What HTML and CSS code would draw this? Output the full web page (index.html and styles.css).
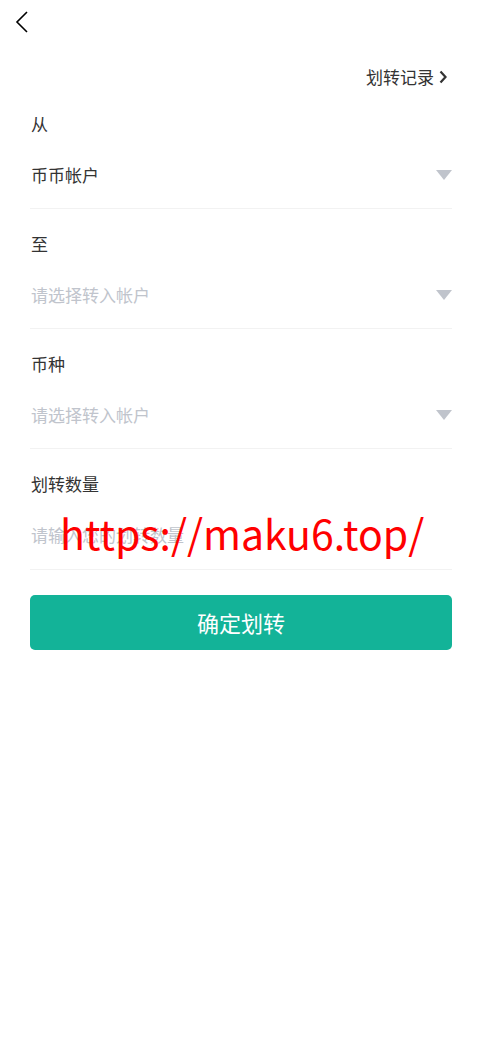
FILE: index.html
```html
<!DOCTYPE html>
<html lang="zh-CN">

<head>
  <meta charset="UTF-8">
  <meta name="viewport" content="width=device-width, initial-scale=1.0">
  <title>划转</title>
  <link rel="stylesheet" href="styles.css">
</head>

<body>

  <header class="nav-bar">
    <a class="back" href="#">
      <svg width="14" height="22" viewBox="0 0 14 22">
        <path d="M12 1 L2 11 L12 21" fill="none" stroke="#000" stroke-width="1.6" />
      </svg>
    </a>
  </header>

  <div class="records">
    <a href="#">划转记录
      <svg width="10" height="14" viewBox="0 0 10 14">
        <path d="M2.5 1.5 L7.5 7 L2.5 12.5" fill="none" stroke="#333" stroke-width="2.2" />
      </svg>
    </a>
  </div>

  <form class="transfer">
    <div class="field">
      <label>从</label>
      <div class="select">
        <span>币币帐户</span>
        <i class="caret"></i>
      </div>
    </div>

    <div class="field">
      <label>至</label>
      <div class="select">
        <span class="placeholder">请选择转入帐户</span>
        <i class="caret"></i>
      </div>
    </div>

    <div class="field">
      <label>币种</label>
      <div class="select">
        <span class="placeholder">请选择转入帐户</span>
        <i class="caret"></i>
      </div>
    </div>

    <div class="field amount">
      <label>划转数量</label>
      <div class="select">
        <input type="text" placeholder="请输入您的划转数量">
      </div>
    </div>

    <button type="button" class="submit">确定划转</button>
  </form>

  <div class="watermark">https://maku6.top/</div>

</body>

</html>
```

FILE: styles.css
```css
body {
  margin: 0;
  padding: 0;
  background-color: #fff;
  color: #333;
  font-family: "Noto Sans CJK SC", "Noto Sans", sans-serif;
  font-size: 17px;
  position: relative;
}

.nav-bar {
  height: 44px;
  display: flex;
  align-items: center;
  padding-left: 15px;
}

.back {
  display: flex;
  margin-top: -1px;
}

.records {
  margin: 22px 0 1px;
  padding-right: 35px;
  text-align: right;
  line-height: 22px;
}

.records a {
  color: #333;
  text-decoration: none;
  display: inline-flex;
  align-items: center;
  gap: 4px;
}

.transfer {
  padding: 0 31px 0 30px;
}

.field {
  padding: 24px 0 23px;
  border-bottom: 1px solid #f2f2f2;
}

.field label {
  display: block;
  line-height: 22px;
  padding-left: 1px;
}

.select {
  margin-top: 28px;
  height: 22px;
  display: flex;
  align-items: center;
  justify-content: space-between;
  padding-left: 1px;
}

.amount .select {
  height: 23px;
}

.placeholder {
  color: #c0c4cc;
}

.select input {
  border: none;
  outline: none;
  padding: 0;
  font: inherit;
  width: 100%;
  color: #333;
}

.select input::placeholder {
  color: #c0c4cc;
}

.caret {
  width: 0;
  height: 0;
  border-left: 8px solid transparent;
  border-right: 8px solid transparent;
  border-top: 10px solid #c0c4cc;
  margin-top: 2px;
}

.submit {
  display: block;
  width: 100%;
  height: 55px;
  margin-top: 25px;
  border: none;
  border-radius: 5px;
  background-color: #13b398;
  color: #fff;
  font-family: inherit;
  font-size: 22px;
  line-height: 53px;
  cursor: pointer;
}

/* red link stamped over the amount row */
.watermark {
  position: absolute;
  left: 60px;
  top: 504px;
  color: #ff0000;
  font-family: "Noto Sans CJK SC", "Noto Sans", sans-serif;
  font-size: 41px;
  line-height: 56px;
  pointer-events: none;
}
```
